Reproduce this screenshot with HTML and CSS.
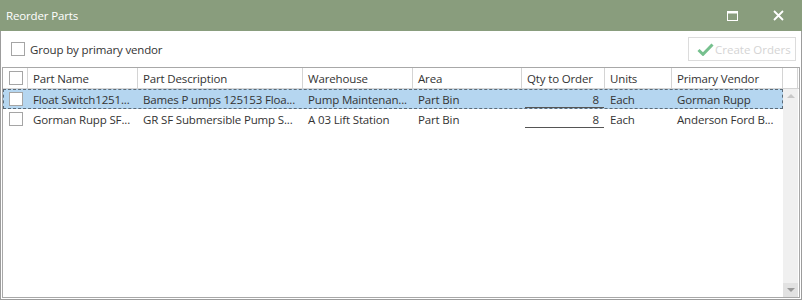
FILE: index.html
```html
<!DOCTYPE html>
<html lang="en">
<head>
  <meta charset="UTF-8" />
  <title>Reorder Parts</title>
  <link rel="stylesheet" href="styles.css">
</head>
<body>
  <div class="window">
    <header class="titlebar">
      <span class="title">Reorder Parts</span>
      <div class="win-buttons">
        <svg width="11" height="10" viewBox="0 0 11 10"><rect x="0.5" y="0.5" width="10" height="9" fill="none" stroke="#fff"/><rect x="0" y="0" width="11" height="2.5" fill="#fff"/></svg>
        <svg width="11" height="11" viewBox="0 0 11 11"><path d="M1 1L10 10M10 1L1 10" stroke="#fff" stroke-width="1.8"/></svg>
      </div>
    </header>
    <div class="toolbar">
      <label class="check-label"><span class="box"></span>Group by primary vendor</label>
      <button class="create-btn" disabled>
        <svg width="17" height="13" viewBox="0 0 17 13"><path d="M1.5 7L6 11.3L15.5 1.5" fill="none" stroke="#76c08e" stroke-width="3"/></svg>
        Create Orders
      </button>
    </div>
    <div class="grid">
      <div class="row head">
        <div class="cell chk"><span class="box"></span></div>
        <div class="cell">Part Name</div>
        <div class="cell">Part Description</div>
        <div class="cell">Warehouse</div>
        <div class="cell">Area</div>
        <div class="cell">Qty to Order</div>
        <div class="cell">Units</div>
        <div class="cell">Primary Vendor</div>
        <div class="cell"></div>
      </div>
      <div class="body">
        <div class="rows">
          <div class="row selected">
            <div class="cell chk"><span class="box"></span></div>
            <div class="cell">Float Switch1251...</div>
            <div class="cell">Bames P umps 125153 Floa...</div>
            <div class="cell">Pump Maintenan...</div>
            <div class="cell">Part Bin</div>
            <div class="cell qty"><span>8</span></div>
            <div class="cell">Each</div>
            <div class="cell">Gorman Rupp</div>
          </div>
          <div class="row">
            <div class="cell chk"><span class="box"></span></div>
            <div class="cell">Gorman Rupp SF...</div>
            <div class="cell">GR SF Submersible Pump S...</div>
            <div class="cell">A 03 Lift Station</div>
            <div class="cell">Part Bin</div>
            <div class="cell qty"><span>8</span></div>
            <div class="cell">Each</div>
            <div class="cell">Anderson Ford B...</div>
          </div>
        </div>
        <div class="scrollbar">
          <div class="arrow up"></div>
          <div class="track"></div>
          <div class="arrow down"></div>
        </div>
      </div>
    </div>
  </div>
</body>
</html>
```

FILE: styles.css
```css
body {
  margin: 0;
  font-family: 'Open Sans', 'Noto Sans', sans-serif;
  font-size: 11.5px;
  letter-spacing: -0.15px;
  color: #333;
  background: #fff;
}
.window {
  width: 802px;
  height: 300px;
  box-sizing: border-box;
  border: 1px solid #9c9c9c;
  border-top: none;
  display: flex;
  flex-direction: column;
}
.titlebar {
  height: 31px;
  margin: 0 -1px;
  background: #899d7d;
  color: #fff;
  display: flex;
  align-items: center;
  justify-content: space-between;
  padding: 0 18px 0 6px;
  flex-shrink: 0;
}
.win-buttons {
  display: flex;
  align-items: center;
  gap: 35px;
}
.toolbar {
  height: 36px;
  display: flex;
  align-items: center;
  justify-content: space-between;
  padding: 0 5px 0 10px;
  flex-shrink: 0;
}
.check-label {
  display: flex;
  align-items: center;
  gap: 5px;
}
.box {
  display: inline-block;
  width: 12px;
  height: 12px;
  border: 1px solid #a5a5a5;
  background: #fff;
}
.create-btn {
  width: 108px;
  height: 24px;
  border: 1px solid #dcdcdc;
  background: #fff;
  color: #d4d4d4;
  font: inherit;
  display: flex;
  align-items: center;
  gap: 1px;
  padding: 0 0 0 8px;
}
.grid {
  flex: 1;
  margin: 0 1px 1px 1px;
  border: 1px solid #a8a8a8;
  display: flex;
  flex-direction: column;
}
.row {
  display: grid;
  grid-template-columns: 25px 110px 165px 110px 109px 83px 67px 111px;
  height: 20px;
}
.row.head {
  grid-template-columns: 25px 110px 165px 110px 109px 83px 67px 111px 15px;
  height: 20px;
  border-bottom: 1px solid #d4d4d4;
}
.cell {
  display: flex;
  align-items: center;
  padding-left: 5px;
  white-space: nowrap;
  overflow: hidden;
}
.head .cell {
  border-right: 1px solid #d4d4d4;
}
.cell.chk {
  padding-left: 6px;
}
.body {
  flex: 1;
  display: flex;
}
.rows {
  width: 780px;
}
.row.selected {
  background: #b5d6f0;
  outline: 1px dashed #5a6a78;
  outline-offset: -1px;
}
.qty {
  padding: 0 1px 0 3px;
}
.qty span {
  flex: 1;
  text-align: right;
  padding-right: 5px;
  border-bottom: 1px solid #555;
  line-height: 15px;
  margin-top: 1px;
}
.scrollbar {
  width: 15px;
  background: #f0f0f0;
  display: flex;
  flex-direction: column;
}
.track {
  flex: 1;
}
.arrow {
  height: 14px;
  display: flex;
  align-items: center;
  justify-content: center;
}
.arrow::after {
  content: '';
  border-left: 4px solid transparent;
  border-right: 4px solid transparent;
}
.arrow.up::after {
  border-bottom: 4px solid #c8c8c8;
}
.arrow.down {
  background: #e2e2e2;
}
.arrow.down::after {
  border-top: 4px solid #9a9a9a;
}
```
